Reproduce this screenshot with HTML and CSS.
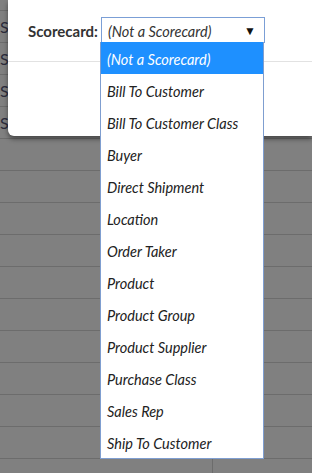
FILE: index.html
```html
<!DOCTYPE html>
<html lang="en">
<head>
  <meta charset="UTF-8" />
  <title>Scorecard</title>
  <link rel="stylesheet" href="styles.css">
</head>
<body>
  <div class="grid">
    <div class="grid-row first"></div>
    <div class="grid-row"><span class="cell">S</span></div>
    <div class="grid-row"><span class="cell">S</span></div>
    <div class="grid-row"><span class="cell">S</span></div>
    <div class="grid-row"><span class="cell">S</span></div>
    <div class="grid-row"></div>
    <div class="grid-row"></div>
    <div class="grid-row"></div>
    <div class="grid-row"></div>
    <div class="grid-row"></div>
    <div class="grid-row"></div>
    <div class="grid-row"></div>
    <div class="grid-row"></div>
    <div class="grid-row"></div>
    <div class="grid-row"></div>
    <div class="grid-row split">
      <span class="col-a"></span><span class="col-b"></span>
    </div>
  </div>

  <div class="dialog">
    <div class="field-row">
      <label class="field-label">Scorecard:</label>
      <div class="select-box">
        <span>(Not a Scorecard)</span>
        <span class="arrow">&#9660;</span>
      </div>
    </div>
    <div class="divider"></div>
  </div>

  <ul class="dropdown">
    <li class="selected">(Not a Scorecard)</li>
    <li>Bill To Customer</li>
    <li>Bill To Customer Class</li>
    <li>Buyer</li>
    <li>Direct Shipment</li>
    <li>Location</li>
    <li>Order Taker</li>
    <li>Product</li>
    <li>Product Group</li>
    <li>Product Supplier</li>
    <li>Purchase Class</li>
    <li>Sales Rep</li>
    <li>Ship To Customer</li>
  </ul>
</body>
</html>
```

FILE: styles.css
```css
body {
  margin: 0;
  padding: 0;
  font-family: 'Lato', sans-serif;
  background-color: #808080;
  width: 312px;
  height: 473px;
  overflow: hidden;
  position: relative;
}

.grid {
  display: flex;
  flex-direction: column;
}

.grid-row {
  height: 31px;
  border-bottom: 1px solid #6c6c6c;
  display: flex;
  align-items: center;
}

.grid-row.first {
  height: 10px;
}

.cell {
  font-family: 'Lato', sans-serif;
  font-size: 16px;
  color: #2c2c3c;
}

.split {
  align-items: stretch;
  border-bottom: none;
}

.col-a {
  width: 212px;
  border-right: 1px solid #6c6c6c;
}

.dialog {
  position: absolute;
  top: 0;
  left: 8px;
  right: 0;
  height: 136px;
  background: #fff;
  border-radius: 0 0 0 6px;
  box-shadow: 0 3px 5px rgba(0, 0, 0, 0.45);
}

.field-row {
  display: flex;
  align-items: center;
  padding: 17px 0 0 20px;
  gap: 3px;
}

.field-label {
  font-weight: 700;
  font-size: 15px;
  color: #333;
  padding-top: 2px;
}

.select-box {
  width: 162px;
  height: 24px;
  border: 1px solid #7b9fd6;
  display: flex;
  align-items: center;
  justify-content: space-between;
  font-style: italic;
  font-size: 14.5px;
  color: #333;
}

.select-box span:first-child {
  padding: 2px 0 0 6px;
}

.arrow {
  font-style: normal;
  font-size: 12px;
  color: #111;
  padding-right: 8px;
}

.divider {
  margin-top: 18px;
  border-top: 1px solid #e2e2e2;
}

.dropdown {
  position: absolute;
  top: 42px;
  left: 100px;
  width: 162px;
  margin: 0;
  padding: 0;
  list-style: none;
  background: #fff;
  border: 1px solid #7f9ed0;
  border-top: none;
}

.dropdown li {
  height: 30px;
  padding: 2px 0 0 6px;
  line-height: 32px;
  font-style: italic;
  font-size: 14.5px;
  color: #222;
}

.dropdown li.selected {
  background: #1e90ff;
  color: #fff;
}
```
